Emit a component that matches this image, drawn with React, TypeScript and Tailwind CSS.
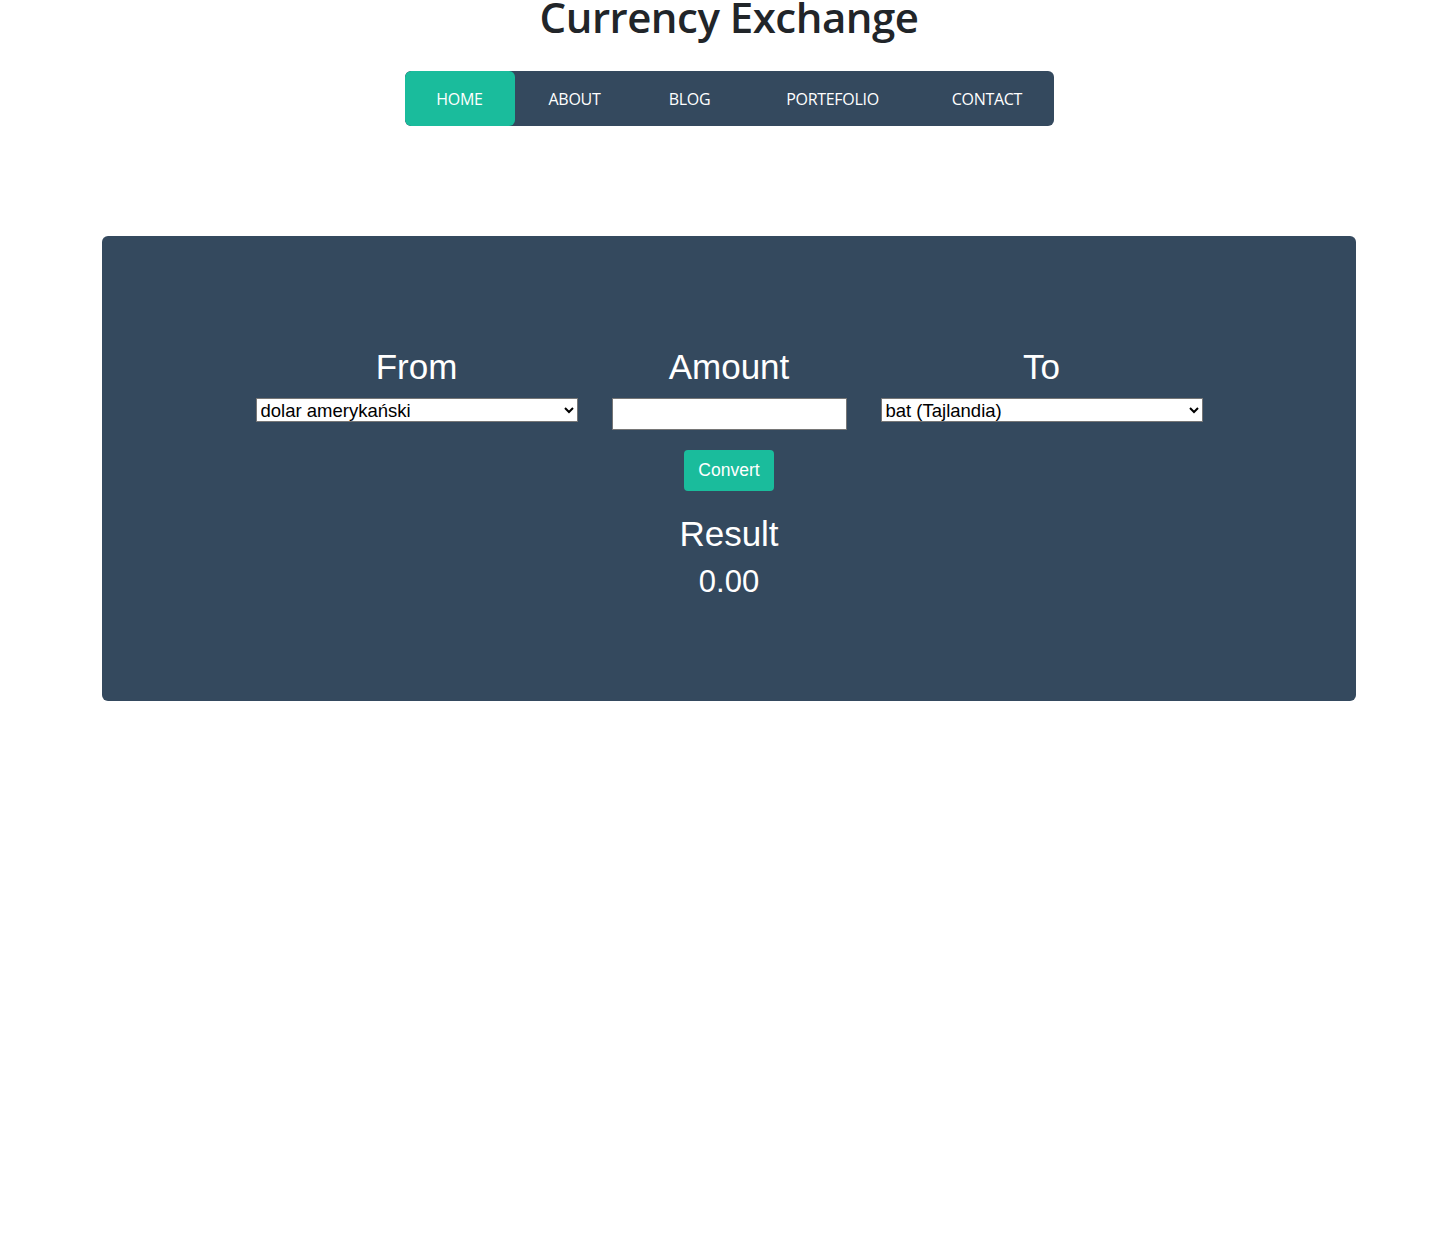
import React from "react";

export default function App() {
  const nav = [
    { label: "HOME", w: "w-[110px]", active: true },
    { label: "ABOUT", w: "w-[120px]" },
    { label: "BLOG", w: "w-[110px]" },
    { label: "PORTEFOLIO", w: "w-[176px]" },
    { label: "CONTACT", w: "w-[133px]" },
  ];
  return (
    <div className="min-h-[1244px] bg-white pl-[7px]" style={{ fontFamily: '"Liberation Sans", Arial, sans-serif' }}>
      <h1
        className="text-center text-[42px] font-semibold leading-[44px] text-[#212529] mt-[-5px] tracking-[-0.5px]"
        style={{ fontFamily: '"Open Sans", "Noto Sans", sans-serif' }}
      >
        Currency Exchange
      </h1>
      <div className="flex justify-center mt-[32px]">
        <nav
          className="flex h-[55px] rounded-md bg-[#34495e] overflow-hidden"
          style={{ fontFamily: '"Open Sans", "Noto Sans", sans-serif' }}
        >
          {nav.map((n) => (
            <a
              key={n.label}
              className={`${n.w} flex items-center justify-center text-[16px] tracking-[-0.3px] text-white ${
                n.active ? "bg-[#1abc9c] rounded-md" : ""
              }`}
            >
              {n.label}
            </a>
          ))}
        </nav>
      </div>
      <div className="mx-auto mt-[110px] w-[1254px] h-[465px] rounded-md bg-[#34495e] pt-[111px] flex flex-col items-center text-white">
        <div className="flex gap-[34px] items-start">
          <div className="w-[322px] flex flex-col items-center">
            <div className="text-[35px] leading-[40px]">From</div>
            <select className="mt-[11px] w-[322px] h-[24px] bg-white text-black text-[18.5px] leading-[20px] border border-[#767676] pl-0 pr-1">
              <option>dolar amerykański</option>
            </select>
          </div>
          <div className="w-[235px] flex flex-col items-center">
            <div className="text-[35px] leading-[40px]">Amount</div>
            <input className="mt-[11px] w-[235px] h-[32px] bg-white text-black border border-[#767676]" />
          </div>
          <div className="w-[322px] flex flex-col items-center">
            <div className="text-[35px] leading-[40px]">To</div>
            <select className="mt-[11px] w-[322px] h-[24px] bg-white text-black text-[18.5px] leading-[20px] border border-[#767676] pl-0 pr-1">
              <option>bat (Tajlandia)</option>
            </select>
          </div>
        </div>
        <button className="mt-[20px] w-[90px] h-[41px] rounded bg-[#1abc9c] text-white text-[17.5px]">
          Convert
        </button>
        <div className="mt-[23px] text-[35px] leading-[40px]">Result</div>
        <div className="mt-[11px] text-[31px] leading-[34px]">0.00</div>
      </div>
    </div>
  );
}
